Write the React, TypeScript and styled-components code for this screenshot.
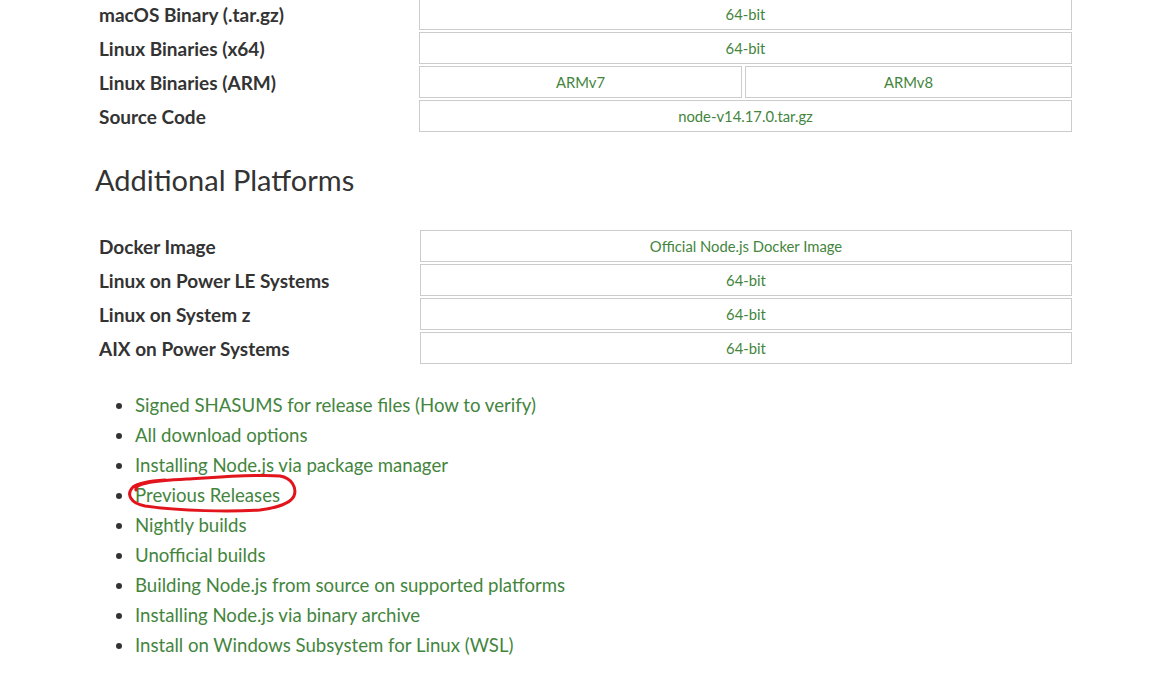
import styled, { createGlobalStyle } from "styled-components";

const GlobalStyle = createGlobalStyle`
  html, body {
    margin: 0;
    padding: 0;
    background: #fff;
  }
  body {
    font-family: Lato, "Open Sans", sans-serif;
    color: #333;
    overflow: hidden;
  }
`;

type Cell = { label: string; width?: number };
type Row = { name: string; cells: Cell[] };

const mainRows: Row[] = [
  { name: "macOS Binary (.tar.gz)", cells: [{ label: "64-bit" }] },
  { name: "Linux Binaries (x64)", cells: [{ label: "64-bit" }] },
  {
    name: "Linux Binaries (ARM)",
    cells: [{ label: "ARMv7", width: 323 }, { label: "ARMv8" }],
  },
  { name: "Source Code", cells: [{ label: "node-v14.17.0.tar.gz" }] },
];

const extraRows: Row[] = [
  { name: "Docker Image", cells: [{ label: "Official Node.js Docker Image" }] },
  { name: "Linux on Power LE Systems", cells: [{ label: "64-bit" }] },
  { name: "Linux on System z", cells: [{ label: "64-bit" }] },
  { name: "AIX on Power Systems", cells: [{ label: "64-bit" }] },
];

const links = [
  "Signed SHASUMS for release files (How to verify)",
  "All download options",
  "Installing Node.js via package manager",
  "Previous Releases",
  "Nightly builds",
  "Unofficial builds",
  "Building Node.js from source on supported platforms",
  "Installing Node.js via binary archive",
  "Install on Windows Subsystem for Linux (WSL)",
];

const Page = styled.main`
  margin-top: -2px;
  padding-left: 95px;
  width: 980px;
`;

const Table = styled.div<{ $labelWidth: number }>`
  display: grid;
  grid-template-columns: ${({ $labelWidth }) => $labelWidth}px 1fr;
  column-gap: 2px;
  row-gap: 2px;
  margin-left: 2px;
  width: 975px;
`;

const Label = styled.div`
  display: flex;
  align-items: center;
  padding-left: 2px;
  height: 32px;
  font-size: 19px;
  font-weight: 700;
  color: #333;
`;

const Cells = styled.div`
  display: flex;
  gap: 3px;
`;

const DownloadCell = styled.a<{ $width?: number }>`
  flex: ${({ $width }) => ($width ? `0 0 ${$width}px` : "1")};
  display: flex;
  align-items: center;
  justify-content: center;
  height: 32px;
  box-sizing: border-box;
  border: 1px solid #ccc;
  font-size: 14.8px;
  color: #43853d;
  text-decoration: none;
`;

const Heading = styled.h2`
  margin: 30px 0 32px;
  height: 36px;
  line-height: 36px;
  font-size: 29px;
  font-weight: 400;
  color: #333;
`;

const LinkList = styled.ul`
  margin: 26px 0 0;
  padding-left: 40px;
  list-style: disc;
  color: #333;
`;

const Item = styled.li`
  position: relative;
  line-height: 30px;
  font-size: 18.6px;
`;

const Link = styled.a`
  color: #43853d;
  text-decoration: none;
`;

const Scribble = styled.svg`
  position: absolute;
  left: -15px;
  top: -14px;
  width: 190px;
  height: 54px;
  pointer-events: none;
`;

const DownloadTable = ({ rows, labelWidth }: { rows: Row[]; labelWidth: number }) => (
  <Table $labelWidth={labelWidth}>
    {rows.flatMap((row) => [
      <Label key={row.name}>{row.name}</Label>,
      <Cells key={row.name + "-cells"}>
        {row.cells.map((cell) => (
          <DownloadCell key={cell.label} href="#" $width={cell.width}>
            {cell.label}
          </DownloadCell>
        ))}
      </Cells>,
    ])}
  </Table>
);

const App = () => {
  return (
    <>
      <GlobalStyle />
      <Page>
        <DownloadTable rows={mainRows} labelWidth={320} />
        <Heading>Additional Platforms</Heading>
        <DownloadTable rows={extraRows} labelWidth={321} />
        <LinkList>
          {links.map((link) => (
            <Item key={link}>
              <Link href="#">{link}</Link>
              {link === "Previous Releases" && (
                <Scribble viewBox="0 0 190 54">
                  <path
                    d="M 16 24 C 14 18, 30 15, 67 13 C 100 11, 140 8, 160 10 C 172 12, 177 22, 174 30 C 170 38, 155 42, 140 44 C 110 46, 60 45, 25 40 C 10 37, 6 28, 13 21 C 18 17, 30 15, 45 14"
                    fill="none"
                    stroke="#e2151d"
                    strokeWidth="3"
                    strokeLinecap="round"
                    strokeLinejoin="round"
                  />
                </Scribble>
              )}
            </Item>
          ))}
        </LinkList>
      </Page>
    </>
  );
};

export default App;
